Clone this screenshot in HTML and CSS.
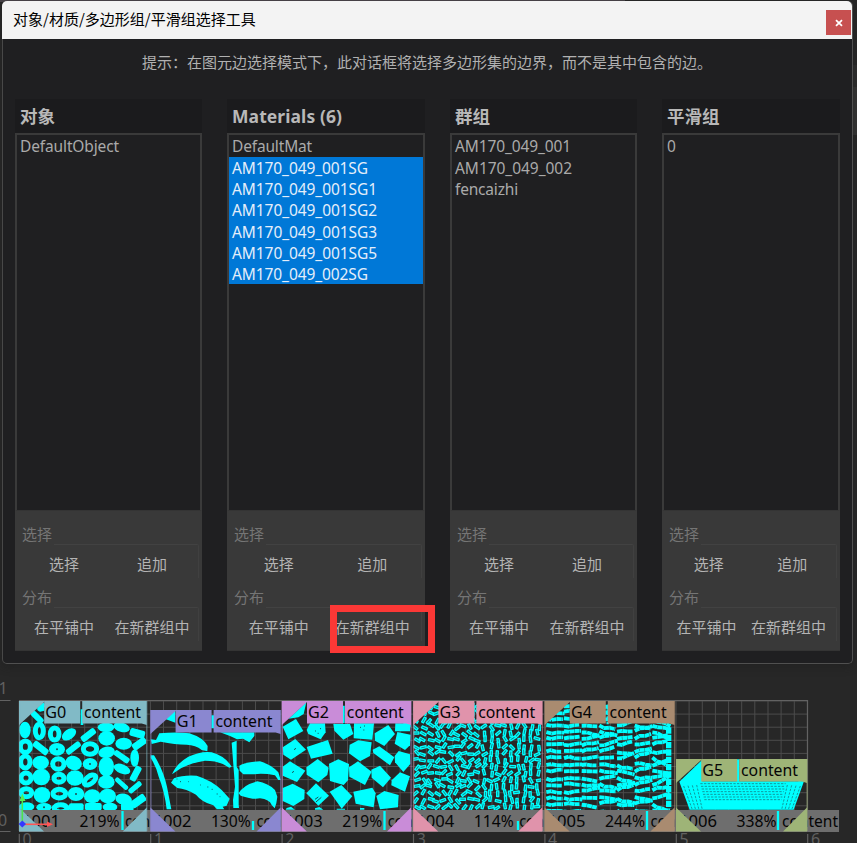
FILE: index.html
```
<!DOCTYPE html>
<html lang="zh-CN">
<head>
<meta charset="utf-8">
<title>选择工具</title>
<link rel="stylesheet" href="styles.css">
</head>
<body>
<div class="app">
  <div class="backdrop-strip"></div>
  <div class="side-tab"></div>
  <main class="dialog">
    <header class="titlebar">
      <h1>对象/材质/多边形组/平滑组选择工具</h1>
      <button class="close" aria-label="关闭"><svg width="8" height="8" viewBox="0 0 8 8"><path d="M1 1.2L7 6.8M7 1.2L1 6.8" stroke="#fff" stroke-width="1.8"/></svg></button>
    </header>
    <p class="hint"><span class="fit" data-w="570">提示：在图元边选择模式下，此对话框将选择多边形集的边界，而不是其中包含的边。</span></p>
    <div class="columns">
      <section class="column">
        <h2>对象</h2>
        <ul><li><span class="fit" data-w="99">DefaultObject</span></li></ul>
        <div class="panel">
          <div class="label">选择</div><div class="actions"><button>选择</button><button>追加</button></div>
          <div class="label">分布</div><div class="actions"><button>在平铺中</button><button>在新群组中</button></div>
        </div>
      </section>
      <section class="column">
        <h2><span class="fit" data-w="110">Materials (6)</span></h2>
        <ul>
          <li><span class="fit" data-w="80">DefaultMat</span></li>
          <li class="on"><span class="fit" data-w="136">AM170_049_001SG</span></li>
          <li class="on"><span class="fit" data-w="145">AM170_049_001SG1</span></li>
          <li class="on"><span class="fit" data-w="145">AM170_049_001SG2</span></li>
          <li class="on"><span class="fit" data-w="145">AM170_049_001SG3</span></li>
          <li class="on"><span class="fit" data-w="145">AM170_049_001SG5</span></li>
          <li class="on"><span class="fit" data-w="136">AM170_049_002SG</span></li>
        </ul>
        <div class="panel">
          <div class="label">选择</div><div class="actions"><button>选择</button><button>追加</button></div>
          <div class="label">分布</div><div class="actions"><button>在平铺中</button><button class="marked">在新群组中</button></div>
        </div>
      </section>
      <section class="column">
        <h2>群组</h2>
        <ul>
          <li><span class="fit" data-w="116">AM170_049_001</span></li>
          <li><span class="fit" data-w="117">AM170_049_002</span></li>
          <li><span class="fit" data-w="63">fencaizhi</span></li>
        </ul>
        <div class="panel">
          <div class="label">选择</div><div class="actions"><button>选择</button><button>追加</button></div>
          <div class="label">分布</div><div class="actions"><button>在平铺中</button><button>在新群组中</button></div>
        </div>
      </section>
      <section class="column">
        <h2>平滑组</h2>
        <ul><li>0</li></ul>
        <div class="panel">
          <div class="label">选择</div><div class="actions"><button>选择</button><button>追加</button></div>
          <div class="label">分布</div><div class="actions tight"><button>在平铺中</button><button>在新群组中</button></div>
        </div>
      </section>
    </div>
  </main>
  <svg class="uv" id="uv" width="857" height="179" viewBox="0 664 857 179"></svg>
</div>
<script src="uv.js"></script>
</body>
</html>
```
FILE: uv.js
```
(function () {
// Fit text runs to the dialog font's advance widths.
document.querySelectorAll('.fit').forEach(function (el) {
  var want = +el.dataset.w, n = el.textContent.length;
  el.style.letterSpacing = ((want - el.getBoundingClientRect().width) / n) + 'px';
});

var seed = 7, x, y, r, c, i, j;
function rnd() { seed = (seed * 16807) % 2147483647; return seed / 2147483647; }
function f(n) { return n.toFixed(1); }

var X0 = 19, STEP = 131.4, out = '';
function tx(i) { return X0 + STEP * i; }

// Tile grid
var g = '';
for (i = 0; i <= 60; i++) g += 'M' + f(X0 + i * 13.14) + ' 701V831';
for (j = 0; j <= 9; j++) g += 'M19 ' + f(701 + j * 13.1) + 'H807.5';
out += '<path class="grid" d="' + g + '"/>';
out += '<path class="axis" d="M0 700.5H10.5M0 831.5H10.5M19 700.5H807.5V831"/>';

// Shells are drawn in units of a third of a pixel.
function shells(ox, body) {
  return '<g class="shell" transform="translate(' + ox + ' 670) scale(.33333)">' + body + '</g>';
}

// G0: rounded pebbles, rings (r), dimpled (d): x, y, rx, ry, rotation, kind
var pebbles = [
 [75,180,17,25,0],[118,183,12,20,0,'r'],[164,192,13,18,0,'r'],[207,193,24,15,-35],[265,195,25,10,-38],[320,205,25,22,0],[318,172,25,14,0],[365,172,25,14,15],[412,190,23,12,15],
 [76,230,15,17,0,'r'],[122,234,26,10,38],[171,238,24,19,0,'d'],[220,234,25,9,-38],[270,237,20,16,0,'r'],[320,247,25,17,-10],[371,221,25,18,0],[418,221,23,11,-35],
 [76,276,14,18,0,'r'],[122,278,25,21,0],[175,282,17,16,0,'r'],[221,279,25,21,25],[270,282,22,18,0,'d'],[319,290,23,30,0],[365,260,26,9,35],[404,264,13,26,0],[366,297,26,14,22],
 [78,324,15,15,0,'r'],[124,321,26,25,0],[177,325,15,12,0,'r'],[225,324,26,23,0],[270,330,20,11,-38,'r'],[319,336,25,20,0],[365,341,24,7,42],[407,311,24,10,-62],[405,352,23,8,-40],
 [79,368,16,12,0,'r'],[126,375,25,24,0],[178,371,19,13,0,'r'],[228,372,25,21,0,'d'],[277,379,25,21,0],[323,378,25,22,0],[371,388,25,17,12],[415,393,24,12,-35],
 [80,410,23,13,0],[132,412,23,13,0,'d'],[182,415,19,11,0,'r'],[229,411,22,11,0],[280,410,25,11,0],[330,411,22,13,0],[382,410,19,12,0],[112,142,22,9,45],[124,112,14,7,-45]];
var b = '';
pebbles.forEach(function (p) {
  var ring = p[5] === 'r', t = ' transform="rotate(' + p[4] + ' ' + p[0] + ' ' + p[1] + ')"';
  if (!ring && p[3] < 13) b += '<rect x="' + (p[0] - p[2]) + '" y="' + (p[1] - p[3]) + '" width="' + 2 * p[2] + '" height="' + 2 * p[3] + '" rx="6"' + t + '/>';
  else b += '<ellipse' + (ring ? ' class="ring"' : '') + ' cx="' + p[0] + '" cy="' + p[1] + '" rx="' + p[2] + '" ry="' + p[3] + '"' + t + '/>';
  if (p[5] === 'd') b += '<circle class="hole" cx="' + p[0] + '" cy="' + p[1] + '" r="3"/>';
});
b += '<path d="M112 115L133 97V122L120 125ZM242 118H250V165H242Z"/>';
out += '<g clip-path="url(#c0)">' + shells(0, b) + '</g>';

// G1: leaves
out += shells(0,
 '<path d="M455 222L452 208L468 210L478 190Q530 185 568 190Q610 203 623 228L622 244L605 240Q587 225 560 224Q525 224 482 215Z"/>' +
 '<path d="M516 313Q530 280 565 260Q605 242 635 247Q675 258 695 290L688 293Q660 272 615 272Q565 280 535 300Z"/>' +
 '<path d="M452 256H462Q490 300 501 350L514 418H500Q494 365 476 320Q469 290 452 264Z"/>' +
 '<path d="M513 338L522 325Q550 314 590 317Q635 331 665 360L689 386L680 407L668 410L673 418H651L640 406Q605 396 588 374Q558 356 532 354Z"/>' +
 '<path d="M695 218L710 212V290L716 300V404L717 414H700L699 390L705 350Z"/>' +
 '<path d="M718 287Q735 276 780 274Q815 284 835 307L842 330L835 330L825 316Q790 309 760 313L730 313L719 302Z"/>' +
 '<path d="M716 370Q730 344 772 334Q805 340 825 360L832 380L829 400L824 415L815 405Q808 388 780 385Q760 390 722 377Z"/>' +
 '<path d="M660 187H763V198L748 217L729 206L711 208L690 198Z"/>' +
 '<path d="M496 147L526 120V158ZM634 136H643V175H634Z"/>' +
 '<path class="specks" d="M530 327h2M540 335h3M565 335h2M600 345h2M622 351h3M635 358h3M650 372h3M659 380h2"/>');

// G2: blocks
out += shells(280,
 ['8,170 48,147 70,183 25,208','80,180 90,160 135,160 137,187 122,208 85,192','160,162 210,162 220,192 190,209 163,182','222,160 282,160 277,209 221,205',
  '284,190 325,165 345,192 313,228 285,212','346,160 392,160 390,184 345,184','352,186 392,194 390,226 375,240 344,221','8,232 46,207 78,239 33,269 10,254','80,231 144,210 158,251 93,266',
  '209,224 235,211 275,217 270,258 240,274 207,250','278,239 298,229 343,262 330,286 280,249','344,258 356,243 390,253 391,282 370,306 345,277',
  '8,290 30,274 76,302 51,336 8,317','79,292 113,267 146,293 142,315 115,337 80,314','147,281 175,268 207,282 204,331 191,345 150,333','207,292 234,274 275,305 255,345 208,320',
  '274,299 300,287 333,323 309,352 275,323','335,331 360,307 390,319 375,365 334,346','8,354 38,341 74,360 73,387 40,408 8,393','79,370 108,340 147,377 115,407',
  '149,365 184,345 217,379 185,416','220,365 277,353 287,370 281,412 227,401','289,378 313,363 356,375 354,412 300,418','26,146 79,97 71,132 55,142'
 ].map(function (s) { return '<polygon points="' + s + '"/>'; }).join('') +
 '<path d="M20 414L33 410L45 419H17ZM105 415L118 411L130 419H105ZM170 416H195V419H170ZM240 414H253V419H240ZM185 107H194V160H185ZM370 170V148L392 140V170Z"/>' +
 '<path class="specks" d="M105 183h3M113 190h3M120 176h3M240 172h3M252 168h3M250 180h3M42 239l6-4M36 308l6-4M108 396l16-14M105 388l10-7"/>');

// G3: small outlined chips
b = '';
for (r = 0; r < 16; r++) for (c = 0; c < 19; c++) {
  x = 409 + c * 20.3 + rnd() * 9 - 4; y = 110 + r * 20 + rnd() * 10 - 5;
  var upright = c > 9 && rnd() > .4, a = upright ? 75 + rnd() * 30 : rnd() * 130 - 65;
  b += '<rect class="chip" x="' + f(x - 8.5) + '" y="' + f(y - 3.2) + '" width="17" height="6.4" transform="rotate(' + f(a) + ' ' + f(x) + ' ' + f(y) + ')"/>';
}
b += '<path d="M581 98V163" stroke="#0ff" stroke-width="6" stroke-dasharray="12 3"/>';
out += '<g clip-path="url(#c3)">' + shells(280, b) + '</g>';

// G4: stacked slivers
b = '';
for (c = 0; c < 7; c++) for (r = 0; r < 17; r++) {
  x = -62 + c * 53; y = 103 + r * 19.8 + rnd() * 6;
  var w = 44 + rnd() * 12, d = (rnd() - .5) * (6 + c * 8), k = rnd() * 10 - 5;
  b += '<path class="sliver" d="M' + f(x) + ' ' + f(y) + 'L' + f(x + w * .3) + ' ' + f(y + d * .3 + k) + 'L' + f(x + w * .65) + ' ' + f(y + d * .6) + 'L' + f(x + w) + ' ' + f(y + d) + '"/>';
}
b += '<path d="M305 172V415" stroke="#0ff" stroke-width="16" stroke-dasharray="19 3"/><path d="M122 105V163" stroke="#0ff" stroke-width="7" stroke-dasharray="14 3"/>';
out += '<g clip-path="url(#c4)">' + shells(567, b) + '</g>';

// G5: fan mesh
b = '<path d="M337 335L405 270V334H695L711 334L680 419H368Z"/>';
for (r = 0; r < 7; r++) b += '<path class="mesh" d="M' + (400 + r * 2) + ' ' + (341 + r * 8) + 'H' + (656 - r * 2) + '"/>';
for (c = 0; c < 4; c++) b += '<path class="mesh" d="M' + (350 + c * 13) + ' ' + (348 - c) + 'L' + (376 + c * 10) + ' 419M' + (700 - c * 13) + ' ' + (348 - c) + 'L' + (674 - c * 10) + ' 419"/>';
b += '<path d="M509 268H517V335H509ZM694 335L694 322L712 335Z"/>';
out += shells(567, b);

// Footer strip and labels
out += '<rect class="strip" x="19" y="810" width="820" height="22"/>';
[122.5, 253, 384.5, 518, 647, 778].forEach(function (t, n) {
  out += '<path class="tick" d="M' + t + ' ' + (n === 1 || n === 3 ? 821 : 811) + 'V830"/>';
});
function text(cls, x, y, w, s) { return '<text class="' + cls + '" x="' + f(x) + '" y="' + y + '" textLength="' + w + '" lengthAdjust="spacingAndGlyphs">' + s + '</text>'; }
var pct = ['219%', '130%', '219%', '114%', '244%', '338%'];
var color = ['#81bac6', '#8a87d0', '#c98cd8', '#e093ab', '#a98b70', '#9eb477'];
var tops = [701, 710, 701, 701, 701, 759];
var ends = [146.7, 280.6, 411, 542.2, 674.5, 807];
for (i = 0; i < 6; i++) {
  x = tx(i);
  out += text('tag', x + 3, 826.5, 38, '100' + (i + 1)) + text('tag', x + 60.5, 826.5, 40, pct[i]) +
    (i < 5 ? text('tag', x + 106, 826.5, 25, 'con') : text('tag', x + 106, 826.5, 56, 'content'));
}
for (i = 0; i < 6; i++) {
  x = tx(i); y = tops[i];
  var e = ends[i];
  out += '<g fill="' + color[i] + '">' +
    '<path d="M' + x + ' ' + y + 'H' + (x + 25.5) + 'V' + (y + .7) + 'L' + x + ' ' + (y + 24) + 'Z"/>' +
    '<path d="M' + (x + 25.2) + ' ' + y + 'h36v22.5h-36ZM' + (x + 63.2) + ' ' + y + 'H' + e + 'V' + (y + 24) + 'l-5 -1.5H' + (x + 63.2) + 'Z"/>' +
    '<path d="M' + x + ' 807.5L' + (x + 25) + ' 831.5H' + x + 'ZM' + e + ' 807.5V831.5H' + (e - 24) + 'Z"/>' +
    '<path opacity=".55" d="M' + x + ' ' + y + 'h1.2V831h-1.2ZM' + (e - .5) + ' ' + y + 'h1.2V831h-1.2Z"/></g>';
  out += text('tag', x + 26.3, y + 16.9, 21, 'G' + i) + text('tag', x + 65, y + 16.9, 57, 'content');
}
// Ruler
for (i = 0; i < 7; i++) {
  out += '<path class="axis" d="M' + f(tx(i) + .3) + ' 834V843"/><text class="ruler" x="' + f(tx(i) + 3.5) + '" y="845">' + i + '</text>';
}
out += '<text class="ruler" x="-1.5" y="693.5">1</text><text class="ruler" x="-2" y="826">0</text>';
// Origin gizmo
out += '<path d="M22.3 822V800" stroke="#4de34d" stroke-width="1.6"/><path d="M19.5 801L22.3 793.5L25.5 801Z" fill="#55ee55"/>' +
  '<path d="M24 824.3H48" stroke="#ff5555" stroke-width="1.6"/><path d="M47 821.5L53 824.3L47 827Z" fill="#ff5555"/>' +
  '<path d="M22.3 820.5L26 824L22.3 827.5L18.7 824Z" fill="#3338ff"/>';

document.getElementById('uv').innerHTML =
  '<defs><clipPath id="c0"><rect x="19" y="701" width="127" height="109"/></clipPath><clipPath id="c3"><rect x="413.5" y="701" width="127.5" height="109"/></clipPath><clipPath id="c4"><rect x="545" y="701" width="129" height="109"/></clipPath></defs>' + out;
})();
```
FILE: styles.css
```
*, *::before, *::after { box-sizing: border-box; }
body { margin: 0; background: #272727; font-family: "Noto Sans", "Noto Sans CJK SC", sans-serif; }
.app { position: relative; width: 857px; height: 843px; overflow: hidden; background: #272727; display: flex; flex-direction: column; }
.backdrop-strip { position: absolute; left: 0; top: 0; width: 625px; height: 2px; background: #494449; }
.side-tab { position: absolute; left: 852px; top: 65px; width: 5px; height: 70px; background: #343434; border-top: 22px solid #2d2d2d; }
.dialog { position: relative; width: 851px; height: 663px; margin: 1px 0 0 2px; flex: none; background: #1f1f21; border: 1px solid #505050; border-top: 0; border-left-color: #484848; border-radius: 5px; display: flex; flex-direction: column; box-shadow: 0 3px 8px #1b1b1b66; }
.titlebar { flex: none; height: 38px; margin: 0 0 0 -1px; background: #f3f3f3; border-radius: 5px 5px 0 0; display: flex; justify-content: space-between; align-items: flex-start; }
h1 { margin: 0 0 0 11px; font: 15px/36px "Noto Sans CJK SC", sans-serif; color: #000; }
.close { width: 25px; height: 25px; margin: 9px 1px 0 0; padding: 0; border: 0; background: #c75050; display: flex; align-items: center; justify-content: center; }
.hint { margin: 11px 0 0 139px; height: 23px; line-height: 23px; font-size: 15px; font-family: "Noto Sans CJK SC", sans-serif; color: #b1b1b1; white-space: nowrap; }
.columns { display: grid; grid-template-columns: 187px 198px 187px 178px; gap: 25px; margin: 26px 0 0 12px; height: 552px; }
.column { display: flex; flex-direction: column; }
h2 { margin: 0; height: 34px; padding-left: 5px; background: #1b1b1d; color: #b8b8b8; font: bold 17.5px/35px "Noto Sans", "Noto Sans CJK SC", sans-serif; white-space: nowrap; }
ul { margin: 0; padding: 0.4px 0 0; height: 378px; list-style: none; border: 2px solid #3a3a3a; border-bottom: 1px solid #343434; }
li { height: 21.3px; padding-left: 3px; font-size: 15.5px; line-height: 22px; color: #aaa; white-space: nowrap; }
li.on { background: #0078d7; color: #e4eefa; }
.panel { height: 140px; padding: 13px 6px 0 5px; background: #393939; border: 0 solid #343434; border-bottom-width: 1px; }
.label { height: 20px; padding-left: 2px; font: 15px/20px "Noto Sans CJK SC", sans-serif; color: #757575; }
.actions { position: relative; height: 43px; display: grid; grid-template-columns: 1fr 1fr; }
.actions.tight { margin: 0 5px 0 0; }
.tight button:first-child { padding-right: 2px; }
.actions::before { content: ""; position: absolute; left: 34px; right: -3px; top: 0; height: 34px; border-top: 1px solid #424242; border-right: 1px solid #404040; border-radius: 0 2px 0 0; }
.actions.tight::before { right: -8px; }
.actions button { position: relative; height: 40px; margin: 0 -4px; padding: 0; border: 0; background: none; color: #b4b4b4; font: 15px/38px "Noto Sans CJK SC", sans-serif; white-space: nowrap; }
.marked::after { content: ""; position: absolute; left: 8px; top: -2px; width: 105px; height: 48px; border: 7px solid #fb3836; }
.uv { display: block; flex: none; }
.grid { stroke: #4c4c4c; stroke-width: 1; fill: none; }
.axis { stroke: #626262; stroke-width: 1.2; fill: none; }
.shell { fill: #0ff; stroke-linejoin: round; }
.ring { fill: none; stroke: #0ff; stroke-width: 15; }
.hole { fill: #1d4d50; }
.specks { stroke: #145457; stroke-width: 3; fill: none; }
.chip { fill: #0a8085; stroke: #0ff; stroke-width: 4; }
.sliver { fill: none; stroke: #0ff; stroke-width: 11.5; stroke-dasharray: 15 1; }
.mesh { fill: none; stroke: #128286; stroke-width: 2.4; stroke-dasharray: 7 4; }
.strip { fill: #6e6e6e; }
.tick { stroke: #0ff; stroke-width: 2.3; }
.tag { font: 16px "Noto Sans", sans-serif; fill: #050505; }
.ruler { font: 16px "Noto Sans", sans-serif; fill: #606060; }
```
